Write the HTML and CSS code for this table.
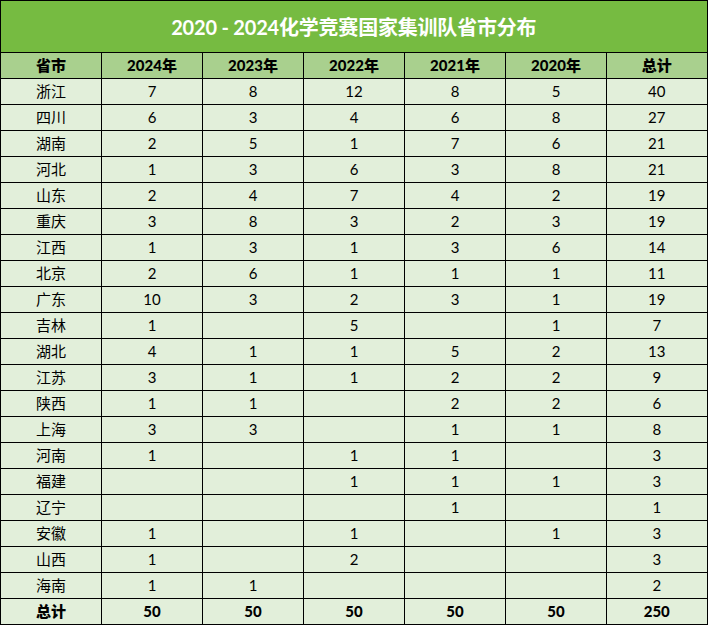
FILE: index.html
```html
<!DOCTYPE html>
<html lang="zh-CN">
<head>
<meta charset="utf-8">
<title>2020 - 2024化学竞赛国家集训队省市分布</title>
<link rel="stylesheet" href="styles.css">
</head>
<body>
<table class="sheet">
  <colgroup>
    <col class="c"><col class="c"><col class="c"><col class="c"><col class="c"><col class="c"><col class="c">
  </colgroup>
  <thead>
    <tr class="title"><th colspan="7">2020 - 2024化学竞赛国家集训队省市分布</th></tr>
    <tr class="head"><th>省市</th><th>2024年</th><th>2023年</th><th>2022年</th><th>2021年</th><th>2020年</th><th>总计</th></tr>
  </thead>
  <tbody>
    <tr><td>浙江</td><td>7</td><td>8</td><td>12</td><td>8</td><td>5</td><td>40</td></tr>
    <tr><td>四川</td><td>6</td><td>3</td><td>4</td><td>6</td><td>8</td><td>27</td></tr>
    <tr><td>湖南</td><td>2</td><td>5</td><td>1</td><td>7</td><td>6</td><td>21</td></tr>
    <tr><td>河北</td><td>1</td><td>3</td><td>6</td><td>3</td><td>8</td><td>21</td></tr>
    <tr><td>山东</td><td>2</td><td>4</td><td>7</td><td>4</td><td>2</td><td>19</td></tr>
    <tr><td>重庆</td><td>3</td><td>8</td><td>3</td><td>2</td><td>3</td><td>19</td></tr>
    <tr><td>江西</td><td>1</td><td>3</td><td>1</td><td>3</td><td>6</td><td>14</td></tr>
    <tr><td>北京</td><td>2</td><td>6</td><td>1</td><td>1</td><td>1</td><td>11</td></tr>
    <tr><td>广东</td><td>10</td><td>3</td><td>2</td><td>3</td><td>1</td><td>19</td></tr>
    <tr><td>吉林</td><td>1</td><td></td><td>5</td><td></td><td>1</td><td>7</td></tr>
    <tr><td>湖北</td><td>4</td><td>1</td><td>1</td><td>5</td><td>2</td><td>13</td></tr>
    <tr><td>江苏</td><td>3</td><td>1</td><td>1</td><td>2</td><td>2</td><td>9</td></tr>
    <tr><td>陕西</td><td>1</td><td>1</td><td></td><td>2</td><td>2</td><td>6</td></tr>
    <tr><td>上海</td><td>3</td><td>3</td><td></td><td>1</td><td>1</td><td>8</td></tr>
    <tr><td>河南</td><td>1</td><td></td><td>1</td><td>1</td><td></td><td>3</td></tr>
    <tr><td>福建</td><td></td><td></td><td>1</td><td>1</td><td>1</td><td>3</td></tr>
    <tr><td>辽宁</td><td></td><td></td><td></td><td>1</td><td></td><td>1</td></tr>
    <tr><td>安徽</td><td>1</td><td></td><td>1</td><td></td><td>1</td><td>3</td></tr>
    <tr><td>山西</td><td>1</td><td></td><td>2</td><td></td><td></td><td>3</td></tr>
    <tr><td>海南</td><td>1</td><td>1</td><td></td><td></td><td></td><td>2</td></tr>
    <tr class="total"><td>总计</td><td>50</td><td>50</td><td>50</td><td>50</td><td>50</td><td>250</td></tr>
  </tbody>
</table>
</body>
</html>
```
FILE: styles.css
```css
html, body {
  margin: 0;
  padding: 0;
  background: #ffffff;
}
.sheet {
  border-collapse: collapse;
  table-layout: fixed;
  width: 708px;
  font-family: Lato, "Noto Sans CJK SC", sans-serif;
  color: #000;
}
.sheet .c {
  width: 101px;
}
.sheet th,
.sheet td {
  border: 1px solid #000;
  padding: 0;
  text-align: center;
  vertical-align: middle;
  height: 25px;
  font-size: 15px;
  line-height: 1;
}
.sheet tbody td {
  background: #e2efda;
}
.title th {
  height: 51px;
  background: #76bb41;
  color: #fff;
  font-size: 20px;
  font-weight: 700;
  letter-spacing: -0.2px;
}
.head th {
  background: #a9d08e;
  font-weight: 900;
  font-size: 15px;
}
.total td {
  font-weight: 900;
  font-size: 15px;
}
.sheet tr > :last-child {
  border-right-width: 2px;
}
```
